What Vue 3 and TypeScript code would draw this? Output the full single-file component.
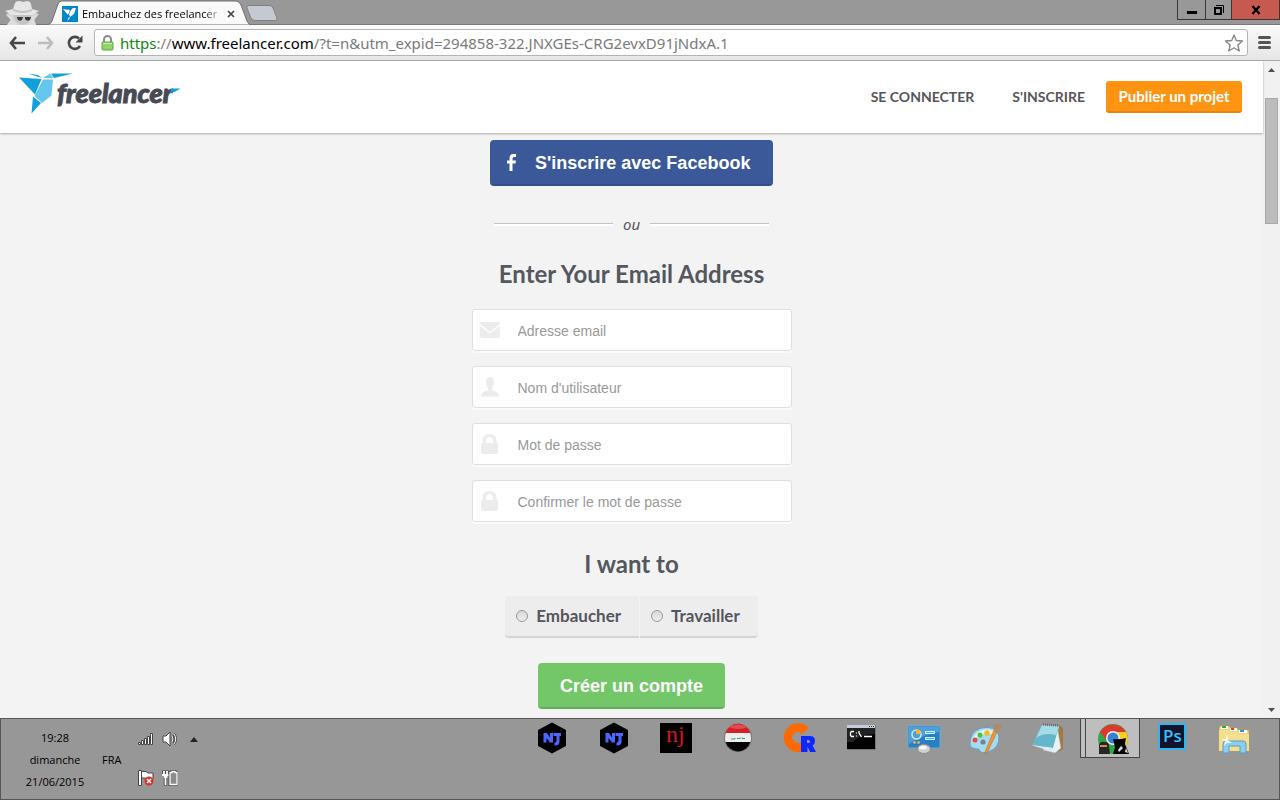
<script setup lang="ts">
import { ref } from 'vue'

interface Field {
  id: string
  label: string
  type: string
  icon: 'mail' | 'user' | 'lock'
}

const fields: Field[] = [
  { id: 'email', label: 'Adresse email', type: 'email', icon: 'mail' },
  { id: 'username', label: "Nom d'utilisateur", type: 'text', icon: 'user' },
  { id: 'password', label: 'Mot de passe', type: 'password', icon: 'lock' },
  { id: 'confirm', label: 'Confirmer le mot de passe', type: 'password', icon: 'lock' },
]

const goals = [
  { value: 'hire', label: 'Embaucher' },
  { value: 'work', label: 'Travailler' },
]

const apps = ['NJ 1', 'NJ 2', 'nj', 'Irak', 'CR', 'Invite de commandes', 'Panneau', 'Paint', 'Bloc-notes', 'Chrome', 'Photoshop', 'Explorateur']

const goal = ref('')
const values = ref<Record<string, string>>({ email: '', username: '', password: '', confirm: '' })
</script>

<template>
  <div class="desktop">
    <div class="titlebar">
      <svg class="incognito" width="36" height="25" viewBox="0 0 36 25" aria-hidden="true">
        <path d="M1 14 L10 11 H25 L34 14 L29 19 L31 25 H2 L6 19Z" fill="#d4d4d4" />
        <path d="M0 11 L8 9 L10 3 Q11 1 14 1 L18 2 L22 1 Q25 1 26 4 L27 9 L34 11 L27 15 L7 15Z" fill="#e6e6e6" />
        <path d="M8 9 Q18 13 27 9 L27 11 Q18 15 8 11Z" fill="#c2c2c2" />
        <path d="M8 15 H27 L24 22 L18 25 L11 22Z" fill="#c4c4c4" />
        <path d="M12 17 H18 L17 20 Q13 22 12 18Z M20 17 H26 L25 20 Q22 22 20 19Z" fill="#3a3a3a" />
        <path d="M6 16 L12 25 H2 L6 20 L1 15Z M28 16 L23 25 H31 L29 20 L33 15Z" fill="#dedede" />
      </svg>
      <div class="tab">
        <svg class="tab-shape" width="204" height="25" viewBox="0 0 204 25" aria-hidden="true">
          <path d="M0 25 Q4 24 5 21 L11 4 Q12 1 15 1 L189 1 Q192 1 194 5 L200 21 Q201 24 204 25Z" fill="#fafafa" stroke="#6f6f6f" />
        </svg>
        <svg class="favicon" width="16" height="16" viewBox="0 0 16 16" aria-hidden="true">
          <rect width="16" height="16" fill="#0087cb" />
          <path d="M1 3 L8 4 L6 9Z M9 4 L11 2 L14 2 L12 8 L8 11 L7 8Z M7 11 L8 12 L5 15Z" fill="#fff" />
        </svg>
        <span class="tab-title">Embauchez des freelancer</span>
        <button class="tab-close" aria-label="Fermer l'onglet">
          <svg width="8" height="8" viewBox="0 0 8 8"><path d="M1 1 L7 7 M7 1 L1 7" stroke="#444" stroke-width="1.700" /></svg>
        </button>
      </div>
      <button class="new-tab" aria-label="Nouvel onglet">
        <svg width="32" height="16" viewBox="0 0 32 16">
          <path d="M3 .5 H23 Q26 .5 27 3 L31 13 Q31.500 15.500 29 15.500 H9 Q6 15.500 5 13 L1 3 Q0 .5 3 .5Z" fill="#c5cad2" stroke="#7e8084" />
        </svg>
      </button>
      <div class="window-buttons">
        <button aria-label="Réduire"><svg width="12" height="12" viewBox="0 0 12 12"><path d="M1 8.500 H11" stroke="#000" stroke-width="3" /></svg></button>
        <button aria-label="Restaurer"><svg width="12" height="12" viewBox="0 0 12 12"><path d="M2 4 H8 V10 H2Z" fill="none" stroke="#000" stroke-width="2" /><path d="M3 1.500 H10.500 V9" fill="none" stroke="#000" /></svg></button>
        <button class="quit" aria-label="Fermer"><svg width="12" height="12" viewBox="0 0 12 12"><path d="M2.500 2 L9.500 10 M9.500 2 L2.500 10" stroke="#000" stroke-width="2.300" /></svg></button>
      </div>
    </div>

    <div class="toolbar">
      <button class="nav-icon" aria-label="Retour"><svg width="16" height="14" viewBox="0 0 16 14"><path d="M7 1 L2 7 L7 13 M2 7 H16" fill="none" stroke="#474747" stroke-width="2.600" /></svg></button>
      <button class="nav-icon" aria-label="Avancer"><svg width="16" height="14" viewBox="0 0 16 14"><path d="M9 1 L14 7 L9 13 M14 7 H0" fill="none" stroke="#bdbdbd" stroke-width="2.600" /></svg></button>
      <button class="nav-icon" aria-label="Actualiser"><svg width="16" height="16" viewBox="0 0 16 16"><path d="M13 11 A6 6 0 1 1 12 3.500" fill="none" stroke="#474747" stroke-width="2.600" /><path d="M15.500 .5 V7.500 H8.500Z" fill="#474747" /></svg></button>
      <div class="address">
        <svg width="13" height="16" viewBox="0 0 13 16" aria-hidden="true">
          <path d="M3 8 V4.500 A3.500 3.500 0 0 1 10 4.500 V8" fill="none" stroke="#8c8c8c" stroke-width="2" />
          <rect x="1" y="7" width="11" height="8" rx="1" fill="#92d46c" stroke="#5aa63a" />
          <path d="M2 8.500 H11" stroke="#c8efb1" />
        </svg>
        <div class="url" role="textbox" aria-label="Adresse" contenteditable="true" spellcheck="false"><span class="secure">https</span><span class="dim">://</span>www.freelancer.com<span class="dim">/?t=n&amp;utm_expid=294858-322.JNXGEs-CRG2evxD91jNdxA.1</span></div>
        <button class="star" aria-label="Ajouter aux favoris"><svg width="20" height="18" viewBox="0 0 20 18"><path d="M10 1 L12.300 6.500 L18.500 7 L13.800 11 L15.300 17 L10 13.800 L4.700 17 L6.200 11 L1.500 7 L7.700 6.500Z" fill="#fff" stroke="#858585" stroke-width="1.300" stroke-linejoin="round" /></svg></button>
      </div>
      <button class="menu" aria-label="Menu"><svg width="13" height="13" viewBox="0 0 13 13"><path d="M1.500 1.500 H11.500 M1.500 6.500 H11.500 M1.500 11.500 H11.500" stroke="#555" stroke-width="3" stroke-linecap="round" /></svg></button>
    </div>

    <div class="viewport">
      <div class="page">
        <header class="site-header">
          <a href="#" class="logo" aria-label="freelancer">
            <svg width="164" height="43" viewBox="0 0 164 43">
              <path d="M0 5.500 L22.500 7 L16 22.500Z M9 1.500 L19 3 L23 6Z M32 1.500 L54 1.500 L35 6Z M14 24.500 L22 31 L12.500 41.500Z" fill="#139fdc" />
              <path d="M24 6 L31 1.500 L34.500 6Z M24 7.500 L34 7.500 L32.500 23.500 L23 31 L15.500 24Z" fill="#65c7ef" />
              <text x="38" y="31" class="wordmark">freelancer</text>
              <path d="M152.500 16.500 H161.500 L156.500 19.500 L151 21Z" fill="#139fdc" />
            </svg>
          </a>
          <nav class="site-nav">
            <a href="#">SE CONNECTER</a>
            <a href="#">S'INSCRIRE</a>
            <button class="post">Publier un projet</button>
          </nav>
        </header>

        <main class="signup">
          <button class="facebook" type="button">
            <svg width="12" height="18" viewBox="0 0 12 18" aria-hidden="true"><path d="M3.500 17 V9.500 H1 V6.500 H3.500 V4.500 Q3.500 0 7 0 H10 V3 H8 Q6.500 3 6.500 4.500 V6.500 H10 L9.500 9.500 H6.500 V17Z" fill="#fff" /></svg>
            <span>S'inscrire avec Facebook</span>
          </button>
          <div class="divider"><span>ou</span></div>
          <h2>Enter Your Email Address</h2>
          <form @submit.prevent>
            <div class="fields">
              <div v-for="f in fields" :key="f.id" class="field">
                <label :for="f.id" :aria-label="f.label">
                  <svg width="20" height="20" viewBox="0 0 20 20">
                    <template v-if="f.icon === 'mail'">
                      <path d="M0 4 Q0 2 1 2 H19 Q20 2 20 4 L11 11 Q10 12 9 11Z" />
                      <path d="M0 6 L8.500 12.500 Q10 13.500 11.500 12.500 L20 6 V16 Q20 18 18 18 H2 Q0 18 0 16Z" />
                    </template>
                    <path v-else-if="f.icon === 'user'" d="M10 0 Q14 0 14 5 Q14 9 12 10.500 V13 Q13 14 16 15 Q19 16 19 19.500 H1 Q1 16 4 15 Q7 14 8 13 V10.500 Q6 9 6 5 Q6 1 10 0Z" />
                    <path v-else fill-rule="evenodd" d="M1 10 Q1 9 2.500 9 V7 Q2.500 0 9.500 0 Q16.500 0 16.500 7 V9 Q18 9 18 10 V18 Q18 20 16 20 H3 Q1 20 1 18Z M6 9 H13 V7 Q13 3 9.500 3 Q6 3 6 7Z" />
                  </svg>
                </label>
                <input :id="f.id" v-model="values[f.id]" :type="f.type" :placeholder="f.label" />
              </div>
            </div>
            <h2 id="goal-title">I want to</h2>
            <div class="goals" role="radiogroup" aria-labelledby="goal-title">
              <label v-for="g in goals" :key="g.value" :for="g.value">
                <input :id="g.value" v-model="goal" type="radio" name="goal" :value="g.value" />
                <span>{{ g.label }}</span>
              </label>
            </div>
            <button class="create" type="submit">Créer un compte</button>
          </form>
        </main>
      </div>
      <div class="scrollbar" aria-hidden="true">
        <svg width="17" height="17" viewBox="0 0 17 17"><path d="M5 11 L8.500 7 L12 11Z" fill="#505050" /></svg>
        <div class="track"><div class="thumb"></div></div>
        <svg width="17" height="17" viewBox="0 0 17 17"><path d="M5 7 L8.500 11 L12 7Z" fill="#505050" /></svg>
      </div>
    </div>

    <footer class="taskbar">
      <div class="clock">
        <span>19:28</span>
        <span>dimanche</span>
        <span>21/06/2015</span>
      </div>
      <span class="lang">FRA</span>
      <div class="tray">
        <svg width="16" height="16" viewBox="0 0 16 16"><path d="M.5 11.500 h2 v2 h-2z M3.500 9.500 h2 v4 h-2z M6.500 7.500 h2 v6 h-2z M9.500 5.500 h2 v8 h-2z M12.500 2.500 h2 v11 h-2z" fill="#fff" stroke="#444" /></svg>
        <svg width="16" height="16" viewBox="0 0 16 16"><path d="M1 5 H4 L8 1 V15 L4 11 H1Z" fill="#fff" stroke="#444" /><path d="M10 5 Q12 8 10 11 M12 3 Q15.500 8 12 13" fill="none" stroke="#444" stroke-width="2.500" /><path d="M10 5 Q12 8 10 11 M12 3 Q15.500 8 12 13" fill="none" stroke="#fff" /></svg>
        <svg width="8" height="5" viewBox="0 0 8 5"><path d="M0 5 L4 0 L8 5Z" fill="#222" /></svg>
        <svg width="16" height="16" viewBox="0 0 16 16"><path d="M.5 .5 H3.500 V15.500 H.5Z" fill="#fff" stroke="#444" /><path d="M3.500 1.500 H8 L10 3 H15 V9 H9 L7 8 H3.500Z" fill="#fff" stroke="#444" /><circle cx="11" cy="11" r="4.500" fill="#d8322b" /><path d="M9 9 L13 13 M13 9 L9 13" stroke="#fff" stroke-width="1.500" /></svg>
        <svg width="16" height="16" viewBox="0 0 16 16"><path d="M2 .5 V4 M5 .5 V4 M1 6 H6 M3.500 7 V15.500" fill="none" stroke="#444" stroke-width="3.500" /><path d="M2 1 V4 M5 1 V4 M0 5 H7 M1.500 7 H5.500 M3.500 7 V15" stroke="#fff" stroke-width="1.800" /><path d="M8 2.500 H10 V1 H13 V2.500 H15 V14.500 H8Z" fill="#8b8b8b" stroke="#444" stroke-width="3" /><path d="M8 2.500 H10 V1.500 H13 V2.500 H15 V14.500 H8Z" fill="#8b8b8b" stroke="#fff" stroke-width="1.300" /></svg>
      </div>

      <div class="apps">
        <button v-for="(app, i) in apps" :key="app" :aria-label="app" :class="{ active: app === 'Chrome' }">
          <svg width="36" height="36" viewBox="0 0 36 36">
            <template v-if="i < 2">
              <path d="M19 2.500 L33 10 V26 L19 33.500 L5 26 V10Z" fill="#000" />
              <path d="M10.500 22.500 V13 H14 L17 17.500 V13 H20 V22.500 H17 L13.500 18 V22.500Z M20.500 13 H28 V16 H26.500 V22 Q26 26 21.500 25.500 V22.500 Q23.500 22.500 23.500 21 V16 H20.500Z" fill="#4b66ff" />
            </template>
            <template v-else-if="i === 2">
              <rect x="3" y="3" width="32" height="30" fill="#000" />
              <text x="9" y="22" class="nj">nj</text>
            </template>
            <template v-else-if="i === 3">
              <circle cx="19" cy="18" r="14" fill="#777" />
              <circle cx="19" cy="18" r="13" fill="#eee" />
              <path d="M6.500 13 A13 13 0 0 1 31.500 13Z" fill="#d71f27" />
              <path d="M6.500 22 A13 13 0 0 0 31.500 22Z" fill="#050505" />
              <path d="M9 7 Q19 2 29 7 Q19 11 9 7Z" fill="#fff" opacity=".2" />
              <path d="M12 19 h4 v-1 M18 18.500 h3 v-1 M23 17.500 v1 h3" fill="none" stroke="#18a87a" />
            </template>
            <template v-else-if="i === 4">
              <path d="M28 8 A14.500 14.500 0 1 0 20 32 V22 A5.500 5.500 0 1 1 21 14Z" fill="#ff6a00" />
              <path fill-rule="evenodd" d="M20 16 H29 Q34 16 34 21 Q34 24 31.500 25.500 L35 32 H29 L26.500 26.500 V32 H20Z M26 20 V23 H27.500 Q29 23 29 21.500 Q29 20 27.500 20Z" fill="#0a28ff" />
            </template>
            <template v-else-if="i === 5">
              <rect x="4" y="5" width="29" height="25" rx="1" fill="#777" />
              <rect x="4" y="5" width="28" height="24" fill="#020202" />
              <path d="M4 8 H32 V14 Q18 14 10 22 H4Z" fill="#222" />
              <rect x="4" y="5" width="28" height="3" fill="#c4cdda" />
              <path d="M26 6.500 h1 M28 6.500 h1 M30 6.500 h1" stroke="#334" />
              <path d="M11 11.500 H8.500 L7.500 12.500 V15.500 L8.500 16.500 H11 M13.500 12.500 v1 M13.500 15.500 v1 M16 11 v2 l2.500 4 M21 16.500 h8" fill="none" stroke="#fff" stroke-width="1.300" />
            </template>
            <template v-else-if="i === 6">
              <rect x="3" y="6" width="32" height="22" rx="1" fill="#2b7fc0" stroke="#5fb0e2" />
              <path d="M4 7 H34 V12 Q18 14 4 24Z" fill="#4f9fda" />
              <circle cx="11.500" cy="14.500" r="4.500" fill="none" stroke="#cbe9f8" stroke-width="1.500" />
              <path d="M11 14 V9 A5 5 0 0 1 16 14Z" fill="#ffb02e" />
              <path d="M20.500 11.500 h9 v2 h-9z M20.500 17.500 h9 v2 h-9z" fill="#38b6e6" stroke="#d8f1fc" />
              <circle cx="9.500" cy="22.500" r="1.300" fill="#ffc04a" /><circle cx="13.500" cy="22.500" r="1.300" fill="#ffc04a" />
              <ellipse cx="19" cy="29" rx="6.500" ry="4.500" fill="#cfcfcf" stroke="#8a8a8a" /><ellipse cx="18" cy="27.500" rx="4" ry="2" fill="#f4f4f4" />
            </template>
            <template v-else-if="i === 7">
              <path d="M3 25 Q2 12 14 8 Q30 5 32 16 Q33 28 21 32 Q15 34 13 31 Q12 28 9 29 Q4 29 3 25Z" fill="#a9d9ef" stroke="#5a9fc6" />
              <path d="M5 21 Q8 11 18 9.500 Q27 9 29 15 Q16 11 5 21Z" fill="#dff3fb" />
              <circle cx="8" cy="20" r="2.500" fill="#e84a3c" /><circle cx="13" cy="15" r="2.500" fill="#4fbf3c" /><circle cx="20" cy="13" r="2.700" fill="#f7b91c" /><circle cx="16" cy="22" r="2.600" fill="#6c8797" />
              <path d="M27 10 L30 12 L20 33 L17.500 33.500Z" fill="#ee9633" stroke="#b3641b" stroke-width=".5" />
              <path d="M26 6 Q28 4 31 4 Q34 4 35 7 Q34 8 31 13 L27 11 Q27 8 26 6Z" fill="#b08a66" />
            </template>
            <template v-else-if="i === 8">
              <path d="M30 5 L34 8 L34 29 L29 32Z" fill="#a37a3b" />
              <path d="M28 6 L32 28 L26 33 L14 30Z" fill="#e8f1f4" stroke="#a0aeb4" stroke-width=".5" />
              <path d="M13 5 L30 6 L24 28 L3 25Z" fill="#63b6cc" />
              <path d="M13 5 L30 6 L27 15 Q15 12 7 18Z" fill="#a5dae6" />
              <path d="M3 25 L24 28 L25 32 L5 26Z" fill="#dcecf1" />
              <path d="M14 4.500 L30 5.500" stroke="#6b6b6b" stroke-width="2.500" stroke-dasharray="1 1" />
            </template>
            <template v-else-if="i === 9">
              <circle cx="18" cy="19" r="15" fill="#2fa84a" />
              <path d="M5 12 A15 15 0 0 1 31 12 L18 12 L12 21Z" fill="#dc3a2e" />
              <path d="M31 12 A15 15 0 0 1 24 33 L24 19 L19 12Z" fill="#fccd1b" />
              <circle cx="18" cy="18" r="7" fill="#f2f2f2" /><circle cx="18" cy="18" r="5.500" fill="#3a80d2" />
              <path d="M4 33 V25 Q5 21 10 22 Q14 22 14 26 L15 34 H4Z" fill="#272727" /><path d="M5 25 H12 V27 H5Z" fill="#d58a57" />
              <path d="M18 34 L20 27 L18 19 Q24 20 31 18 L30 24 L34 34Z" fill="#050505" /><path d="M26 26 L28 28 L24 32 L23 30Z M31 28 L33 33 L30 32Z" fill="#ddd" />
            </template>
            <template v-else-if="i === 10">
              <rect x="5" y="3" width="28" height="27" fill="#2cb7f3" />
              <rect x="7" y="5" width="24" height="23" fill="#11142a" />
              <text x="10" y="22" class="ps">Ps</text>
            </template>
            <template v-else>
              <path d="M4 8 Q4 6 6 6 H14 L16 8 H22 L24 10 H34 V31 H4Z" fill="#ecd581" stroke="#b99b45" stroke-width=".7" />
              <path d="M6 6 h7 v3 h-7z M15 8 h7 v3 h-7z M24 10 h8 v3 h-8z" fill="#fff" />
              <path d="M7 6 h4 v2 h-4z" fill="#21b32b" /><path d="M16 8 h3 v2 h-3z" fill="#df4127" /><path d="M25 10 h4 v2 h-4z" fill="#2a93e2" />
              <path d="M4 10 H14 L16 12 H22 L24 14 H34 V31 H4Z" fill="#f3df8d" />
              <path d="M8 33 V24 Q8 21 11 21 H28 Q31 21 31 24 V33 H25 V26 H14 V33Z" fill="#8ecdf0" stroke="#559fcb" />
              <path d="M12 14 L13 20 L17 23 L12 23 L9 26 L10 21 L6 19 L11 19Z" fill="#fff" opacity=".75" />
            </template>
          </svg>
        </button>
      </div>
    </footer>
  </div>
</template>

<style>
body {
  margin: 0;
}
</style>

<style scoped>
.desktop {
  display: flex;
  flex-direction: column;
  min-height: 100vh;
  overflow: hidden;
  background: #f3f3f3;
  font-family: "Open Sans", "Noto Sans", sans-serif;
  color: #000;
}
.desktop * {
  box-sizing: border-box;
}
button {
  padding: 0;
  border: 0;
  background: none;
  font-family: inherit;
  cursor: pointer;
}
svg {
  display: block;
  flex: none;
}
a {
  color: inherit;
  text-decoration: none;
}

.titlebar {
  display: flex;
  height: 25px;
  padding-left: 5px;
  background: #989898;
  border-bottom: 1px solid #777;
}
.tab {
  position: relative;
  display: flex;
  align-items: center;
  width: 204px;
  height: 25px;
  margin-left: 6px;
  padding: 2px 14px 0 15px;
}
.tab-shape {
  position: absolute;
  top: 0;
  left: 0;
}
.favicon,
.tab-title,
.tab-close {
  position: relative;
}
.tab-title {
  width: 140px;
  margin-left: 4px;
  white-space: nowrap;
  font-size: 11px;
  line-height: 16px;
  -webkit-mask-image: linear-gradient(to right, #000 88%, transparent);
  mask-image: linear-gradient(to right, #000 88%, transparent);
}
.tab-close {
  margin-left: 5px;
}
.new-tab {
  position: relative;
  align-self: flex-start;
  margin-top: 5px;
  margin-left: -5px;
}
.window-buttons {
  display: flex;
  height: 20px;
  margin-left: auto;
  border: 1px solid #3d3535;
  border-top: 0;
}
.window-buttons button {
  display: flex;
  align-items: center;
  justify-content: center;
  width: 28px;
  border-right: 1px solid #3d3535;
}
.window-buttons button:nth-child(2) {
  width: 26px;
}
.window-buttons .quit {
  width: 47px;
  border: 0;
  background: #c75a50;
}

.toolbar {
  display: flex;
  align-items: center;
  height: 36px;
  padding: 0 9px;
  background: linear-gradient(#fafafa, #e6e6e6);
  border-bottom: 1px solid #a9a9a9;
}
.nav-icon {
  margin-right: 13px;
}
.nav-icon:nth-child(3) {
  margin-right: 11px;
}
.address {
  display: flex;
  flex: 1;
  align-items: center;
  min-width: 0;
  height: 27px;
  padding: 0 3px 0 6px;
  background: #fff;
  border: 1px solid #b4b4b4;
  border-radius: 3px;
}
.url {
  flex: 1;
  min-width: 0;
  margin-left: 6px;
  overflow: hidden;
  white-space: nowrap;
  font: 15px/22px "Noto Sans", sans-serif;
  outline: none;
}
.secure {
  color: #0a8a0a;
}
.dim {
  color: #7a7a7a;
}
.menu {
  margin-left: 10px;
}

.viewport {
  display: flex;
  flex: 1;
}
.page {
  display: flex;
  flex: 1;
  flex-direction: column;
  min-width: 0;
}
.site-header {
  position: relative;
  display: flex;
  align-items: center;
  justify-content: space-between;
  height: 72px;
  padding: 0 21px 0 19px;
  background: #fff;
  box-shadow: 0 1px 2px rgba(0, 0, 0, .3);
}
.logo {
  align-self: flex-start;
  margin-top: 11px;
}
.wordmark {
  font: italic 900 27px Lato, sans-serif;
  fill: #474953;
  stroke: #474953;
  stroke-width: 1px;
}
.site-nav {
  display: flex;
  align-items: center;
  font: 700 14px/20px Lato, sans-serif;
  color: #54565c;
}
.site-nav a {
  margin-right: 38px;
}
.site-nav a:nth-child(2) {
  margin-right: 21px;
}
.post {
  width: 136px;
  height: 32px;
  border-bottom: 2px solid #e8830b;
  border-radius: 3px;
  background: #ff9312;
  color: #fff;
  font: 700 15px/20px Lato, sans-serif;
}

.signup {
  display: flex;
  flex: 1;
  flex-direction: column;
  align-items: center;
  padding: 7px 0 9px;
  background: #f3f3f3;
}
.facebook {
  display: flex;
  align-items: center;
  width: 283px;
  height: 46px;
  padding: 2px 0 0 16px;
  border-bottom: 2px solid #34508a;
  border-radius: 4px;
  background: #3b5998;
  color: #fff;
  font: 700 18px/24px "Liberation Sans", Arial, sans-serif;
}
.facebook span {
  margin-left: 17px;
}
.divider {
  display: flex;
  align-items: center;
  gap: 10px;
  width: 275px;
  margin-top: 27px;
  color: #54565c;
  font: italic 15px/22px "Noto Sans", sans-serif;
}
.divider::before,
.divider::after {
  content: "";
  flex: 1;
  height: 2px;
  border-top: 1px solid #c2c2c2;
  background: #fff;
}
h2 {
  margin: 24px 0 0;
  text-align: center;
  color: #54585e;
  font: 700 24px/30px Lato, sans-serif;
}
form {
  display: flex;
  flex-direction: column;
  align-items: center;
}
.fields {
  display: flex;
  flex-direction: column;
  gap: 15px;
  width: 320px;
  margin-top: 20px;
}
.field {
  display: flex;
  align-items: center;
  height: 42px;
  padding-left: 7px;
  border: 1px solid #dfdfdf;
  border-radius: 3px;
  background: #fff;
  box-shadow: 0 2px 0 #fbfbfb;
}
.field svg {
  fill: #ececec;
}
.field input {
  flex: 1;
  min-width: 0;
  height: 40px;
  margin-left: 18px;
  padding: 2px 0 0;
  border: 0;
  outline: none;
  background: none;
  color: #444;
  font: 14px/20px "Liberation Sans", Arial, sans-serif;
}
.field input::placeholder {
  color: #999;
  opacity: 1;
}
#goal-title {
  margin-top: 27px;
}
.goals {
  display: flex;
  gap: 1px;
  margin-top: 17px;
}
.goals label {
  display: flex;
  align-items: center;
  gap: 8px;
  height: 42px;
  padding: 0 18px 0 11px;
  border-bottom: 2px solid #d3d3d3;
  border-radius: 0 4px 4px 0;
  background: #ededed;
  color: #54565c;
  font: 700 17px/20px Lato, sans-serif;
}
.goals label:first-child {
  border-radius: 4px 0 0 4px;
}
.goals input {
  appearance: none;
  width: 12px;
  height: 12px;
  margin: 0;
  border: 1px solid #999;
  border-radius: 50%;
  background: linear-gradient(#d8d8d8, #eee);
}
.goals input:checked {
  background: radial-gradient(#444 40%, #eee 45%);
}
.create {
  width: 187px;
  height: 46px;
  margin-top: 25px;
  padding-top: 2px;
  border-bottom: 2px solid #64ad5b;
  border-radius: 4px;
  background: #73c768;
  color: #fff;
  font: 700 18px/24px "Liberation Sans", Arial, sans-serif;
}

.scrollbar {
  display: flex;
  flex-direction: column;
  width: 17px;
  background: #f1f1f1;
}
.track {
  flex: 1;
  padding: 20px 2px 0;
}
.thumb {
  height: 126px;
  border: 1px solid #a8a8a8;
  background: #bcbcbc;
}

.taskbar {
  display: flex;
  align-items: flex-start;
  height: 82px;
  padding-right: 15px;
  border: 1px solid #555;
  background: #979797;
}
.clock {
  display: flex;
  flex-direction: column;
  width: 108px;
  padding-top: 8px;
  text-align: center;
  font-size: 11px;
  line-height: 22px;
}
.lang {
  width: 28px;
  margin-top: 30px;
  margin-left: -7px;
  font-size: 11px;
  line-height: 22px;
}
.tray {
  display: grid;
  grid-template-columns: 16px 16px 8px;
  align-items: center;
  gap: 23px 8px;
  padding: 12px 0 0 8px;
}
.tray svg:nth-child(3) {
  margin-left: 4px;
}
.apps {
  display: flex;
  margin-left: auto;
}
.apps button {
  display: flex;
  justify-content: center;
  width: 62px;
  height: 40px;
  padding-top: 1px;
}
.apps .active {
  width: 60px;
  height: 39px;
  margin-left: 2px;
  padding-left: 6px;
  border: 1px solid #444;
  border-top: 0;
  background: linear-gradient(to right, #bebebe 4px, #444 4px, #444 5px, #bebebe 5px);
}
.nj {
  font: 24px "Liberation Serif", serif;
  fill: #d3161d;
}
.ps {
  font: 600 17px "Open Sans", sans-serif;
  fill: #35c3fb;
}
</style>
